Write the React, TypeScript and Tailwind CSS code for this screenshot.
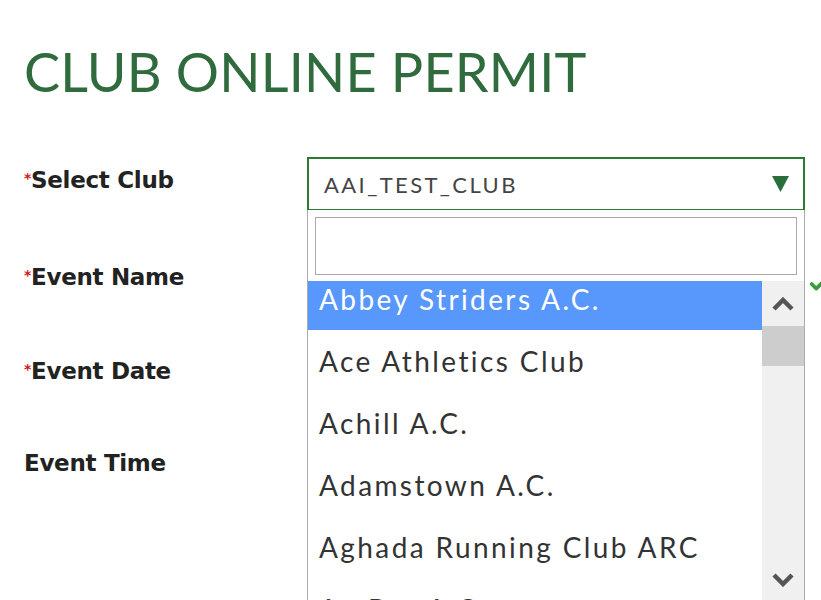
import { Check } from 'lucide-react';

const clubs = [
  'Abbey Striders A.C.',
  'Ace Athletics Club',
  'Achill A.C.',
  'Adamstown A.C.',
  'Aghada Running Club ARC',
  'An Bru A.C.',
];

const labels = [
  { text: 'Select Club', required: true, mt: 'mt-0' },
  { text: 'Event Name', required: true, mt: 'mt-[69px]' },
  { text: 'Event Date', required: true, mt: 'mt-[66px]' },
  { text: 'Event Time', required: false, mt: 'mt-[64px]' },
];

export default function App() {
  return (
    <div className="h-[600px] w-[821px] overflow-hidden bg-white">
      {/* Title */}
      <h1 className="pl-[24px] pt-[42px] text-[54px] leading-[60px] tracking-[0.2px] text-[#2f6b3d] font-['Lato',sans-serif]">
        CLUB ONLINE PERMIT
      </h1>

      <div className="mt-[55px] flex">
        {/* Labels */}
        <div className="w-[307px] pl-[24px] pt-[9px]">
          {labels.map(l => (
            <div
              key={l.text}
              className={`${l.mt} h-[28px] text-[23px] font-bold leading-[28px] text-[#222] font-['DejaVu_Sans',sans-serif] tracking-[-0.3px]`}
            >
              {l.required && <span className="relative -top-[5px] text-[14px] text-[#d0161c]">*</span>}
              {l.text}
            </div>
          ))}
        </div>

        {/* Field column */}
        <div className="relative w-[498px]">
          {/* Select trigger */}
          <div className="flex h-[54px] items-center justify-between border-2 border-[#2b7a34] pl-[15px] pr-[14px]">
            <span className="text-[22px] text-[#444] font-['Lato',sans-serif] tracking-[2.4px]">AAI_TEST_CLUB</span>
            <svg width="17" height="16" viewBox="0 0 17 16">
              <polygon points="0,0 17,0 8.5,16" fill="#2a6e3c" />
            </svg>
          </div>

          {/* Validation tick beside Event Name */}
          <Check size={22} strokeWidth={4} className="absolute -right-[25px] top-[116px] text-[#3c9a3c]" />

          {/* Dropdown */}
          <div className="absolute left-0 top-[53px] h-[400px] w-[498px] border-x border-[#aaa] bg-white">
            <div className="px-[7px] pt-[7px] pb-[6px]">
              <div className="h-[58px] border border-[#aaa] bg-white" />
            </div>
            <div className="flex h-[330px]">
              <div className="flex-1 overflow-hidden">
                <div className="-mt-[13px]">
                  {clubs.map((c, i) => (
                    <div
                      key={c}
                      className={`flex h-[62px] items-center pl-[11px] text-[28px] font-['Lato',sans-serif] tracking-[2.4px] whitespace-nowrap ${
                        i === 0 ? 'bg-[#5897fb] text-white' : 'text-[#333]'
                      }`}
                    >
                      {c}
                    </div>
                  ))}
                </div>
              </div>

              {/* Scrollbar */}
              <div className="flex w-[42px] flex-col bg-[#f0f0f0]">
                <div className="flex h-[45px] items-center justify-center">
                  <svg width="22" height="14" viewBox="0 0 22 14">
                    <path d="M2 12 L11 3 L20 12" stroke="#555" strokeWidth="4.5" fill="none" />
                  </svg>
                </div>
                <div className="h-[40px] bg-[#cdcdcd]" />
                <div className="flex-1" />
                <div className="flex h-[48px] items-start justify-center pt-[10px]">
                  <svg width="22" height="14" viewBox="0 0 22 14">
                    <path d="M2 2 L11 11 L20 2" stroke="#555" strokeWidth="4.5" fill="none" />
                  </svg>
                </div>
              </div>
            </div>
          </div>
        </div>
      </div>
    </div>
  );
}
